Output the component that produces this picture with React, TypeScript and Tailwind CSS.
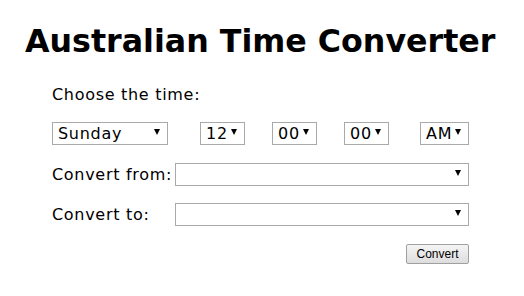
import React from "react";

function Sel({ w, text }: { w: string; text?: string }) {
  return (
    <div
      className={`${w} h-[23px] border border-[#a9a9a9] bg-white flex items-center justify-between pl-[5px] pr-[7px] text-[16px] tracking-[0.7px] leading-none text-black`}
    >
      <span>{text ?? ""}</span>
      <svg width="6" height="6" viewBox="0 0 6 6" className="mb-[3px] shrink-0">
        <path d="M0 0H6L3 6Z" fill="#000" />
      </svg>
    </div>
  );
}

export default function App() {
  return (
    <div className="w-[524px] h-[296px] bg-white text-black font-['DejaVu_Sans',Verdana,sans-serif]">
      <h1 className="pt-[22px] pl-[25px] text-[31.7px] font-bold leading-[38px]">Australian Time Converter</h1>
      <div className="pl-[52px] pr-[55px]">
        <div className="mt-[25px] text-[16px] tracking-[0.7px] leading-[20px]">Choose the time:</div>
        <div className="mt-[17px] flex items-center">
          <Sel w="w-[116px]" text="Sunday" />
          <div className="ml-[32px]"><Sel w="w-[45px]" text="12" /></div>
          <div className="ml-[27px]"><Sel w="w-[45px]" text="00" /></div>
          <div className="ml-[27px]"><Sel w="w-[45px]" text="00" /></div>
          <div className="ml-[31px]"><Sel w="w-[49px]" text="AM" /></div>
        </div>
        <div className="mt-[18px] flex items-center">
          <span className="w-[123px] text-[16px] tracking-[0.7px] leading-[20px]">Convert from:</span>
          <Sel w="w-[294px]" />
        </div>
        <div className="mt-[17px] flex items-center">
          <span className="w-[123px] text-[16px] tracking-[0.7px] leading-[20px]">Convert to:</span>
          <Sel w="w-[294px]" />
        </div>
        <div className="mt-[18px] flex justify-end">
          <button className="w-[63px] h-[20px] border border-[#a0a0a0] rounded-[2px] bg-gradient-to-b from-[#f5f5f5] to-[#dddddd] text-[12px] leading-none font-['Liberation_Sans',Arial,sans-serif] text-black">
            Convert
          </button>
        </div>
      </div>
    </div>
  );
}
